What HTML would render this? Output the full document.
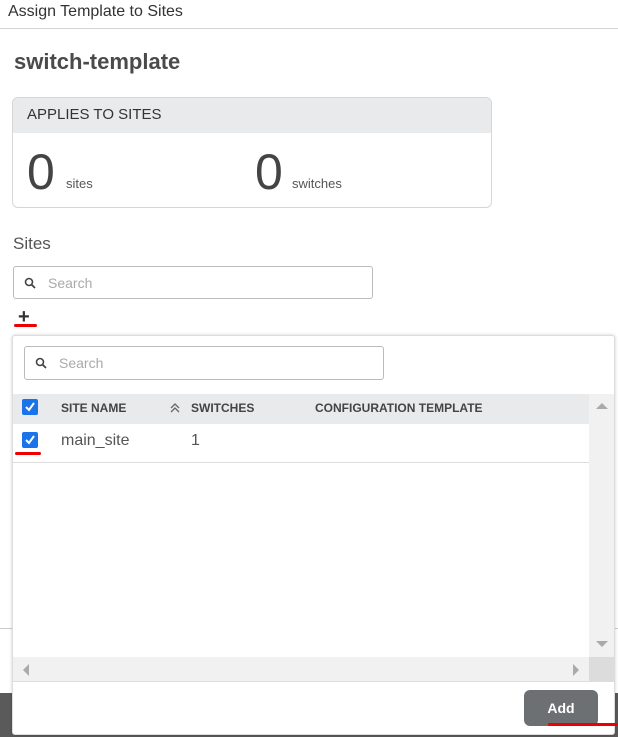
<!DOCTYPE html><html><head><style>
*{box-sizing:border-box;margin:0;padding:0}
body{width:618px;height:737px;position:relative;overflow:hidden;background:#fff;font-family:"Liberation Sans",sans-serif;color:#555}
.a{position:absolute}
.cb{position:absolute;width:16px;height:16px;background:#1a73e8;border-radius:2px}
.cb svg{position:absolute;left:2px;top:2px}
</style></head><body>
<div class="a" style="left:8px;top:3px;font-size:16px;color:#333">Assign Template to Sites</div>
<div class="a" style="left:0;top:28px;width:618px;height:1px;background:#d4d4d4"></div>
<div class="a" style="left:14px;top:49px;font-size:22px;font-weight:bold;color:#4a4a4a">switch-template</div>
<div class="a" style="left:12px;top:97px;width:480px;height:111px;border:1px solid #d6d6d6;border-radius:6px;overflow:hidden">
 <div style="height:35px;background:#e9eaec;padding:8px 0 0 14px;font-size:15px;color:#333">APPLIES TO SITES</div>
 <div class="a" style="left:14px;top:45px;font-size:50px;font-weight:300;color:#444">0</div>
 <div class="a" style="left:53px;top:78px;font-size:13px;color:#555">sites</div>
 <div class="a" style="left:242px;top:45px;font-size:50px;font-weight:300;color:#444">0</div>
 <div class="a" style="left:279px;top:78px;font-size:13px;color:#555">switches</div>
</div>
<div class="a" style="left:13px;top:234px;font-size:17px;color:#555">Sites</div>
<div class="a" style="left:13px;top:266px;width:360px;height:33px;border:1px solid #bbb;border-radius:3px">
 <svg class="a" style="left:10px;top:10px" width="12" height="12"><circle cx="5" cy="5" r="3.5" stroke="#444" stroke-width="1.6" fill="none"/><line x1="7.5" y1="7.5" x2="11" y2="11" stroke="#444" stroke-width="1.8"/></svg>
 <div class="a" style="left:34px;top:8px;font-size:14px;color:#aaa">Search</div></div>
<div class="a" style="left:18px;top:307px;font-size:20px;font-weight:bold;color:#333;line-height:20px">+</div>
<div class="a" style="left:14px;top:324px;width:23px;height:3px;background:#e00;border-radius:2px"></div>
<div class="a" style="left:0;top:628px;width:618px;height:1px;background:#ccc"></div>
<div class="a" style="left:0;top:693px;width:618px;height:44px;background:#5a5a5a"></div>
<div class="a" style="left:12px;top:335px;width:603px;height:400px;background:#fff;border:1px solid #ddd;border-radius:3px;box-shadow:0 0 3px rgba(0,0,0,.2)">
 <div class="a" style="left:11px;top:10px;width:360px;height:34px;border:1px solid #bbb;border-radius:3px">
  <svg class="a" style="left:10px;top:10px" width="12" height="12"><circle cx="5" cy="5" r="3.5" stroke="#444" stroke-width="1.6" fill="none"/><line x1="7.5" y1="7.5" x2="11" y2="11" stroke="#444" stroke-width="1.8"/></svg>
  <div class="a" style="left:34px;top:8px;font-size:14px;color:#aaa">Search</div></div>
 <div class="a" style="left:0;top:58px;width:576px;height:30px;background:#e9eaec"></div>
 <div class="cb" style="left:9px;top:63px"><svg width="12" height="12"><path d="M2 6l3 3 5-7" stroke="#fff" stroke-width="2" fill="none"/></svg></div>
 <div class="a" style="left:48px;top:65px;font-size:12px;font-weight:bold;color:#444">SITE NAME</div>
 <svg class="a" style="left:157px;top:67px" width="10" height="10"><path d="M1 5l4-4 4 4M1 9l4-4 4 4" stroke="#666" stroke-width="1.3" fill="none"/></svg>
 <div class="a" style="left:178px;top:65px;font-size:12px;font-weight:bold;color:#444">SWITCHES</div>
 <div class="a" style="left:302px;top:65px;font-size:12px;font-weight:bold;color:#444">CONFIGURATION TEMPLATE</div>
 <div class="cb" style="left:9px;top:96px"><svg width="12" height="12"><path d="M2 6l3 3 5-7" stroke="#fff" stroke-width="2" fill="none"/></svg></div>
 <div class="a" style="left:2px;top:116px;width:26px;height:3px;background:#e00;border-radius:2px"></div>
 <div class="a" style="left:48px;top:96px;font-size:16px;color:#555">main_site</div>
 <div class="a" style="left:178px;top:96px;font-size:16px;color:#555">1</div>
 <div class="a" style="left:0;top:126px;width:576px;height:1px;background:#ddd"></div>
 <div class="a" style="left:576px;top:58px;width:25px;height:263px;background:#f1f1f1"></div>
 <div class="a" style="left:583px;top:67px;width:0;height:0;border-left:6px solid transparent;border-right:6px solid transparent;border-bottom:6px solid #aaa"></div>
 <div class="a" style="left:583px;top:305px;width:0;height:0;border-left:6px solid transparent;border-right:6px solid transparent;border-top:6px solid #aaa"></div>
 <div class="a" style="left:0;top:321px;width:576px;height:25px;background:#f1f1f1;border-bottom:1px solid #ddd"></div>
 <div class="a" style="left:576px;top:321px;width:25px;height:25px;background:#dcdcdc"></div>
 <div class="a" style="left:10px;top:328px;width:0;height:0;border-top:6px solid transparent;border-bottom:6px solid transparent;border-right:6px solid #aaa"></div>
 <div class="a" style="left:560px;top:328px;width:0;height:0;border-top:6px solid transparent;border-bottom:6px solid transparent;border-left:6px solid #aaa"></div>
 <div class="a" style="left:511px;top:354px;width:74px;height:36px;background:#6d7073;border-radius:6px;color:#fff;font-size:14px;font-weight:bold;text-align:center;line-height:36px">Add</div>
</div>
<div class="a" style="left:548px;top:723px;width:70px;height:3px;background:#e00;border-radius:2px"></div>
</body></html>
